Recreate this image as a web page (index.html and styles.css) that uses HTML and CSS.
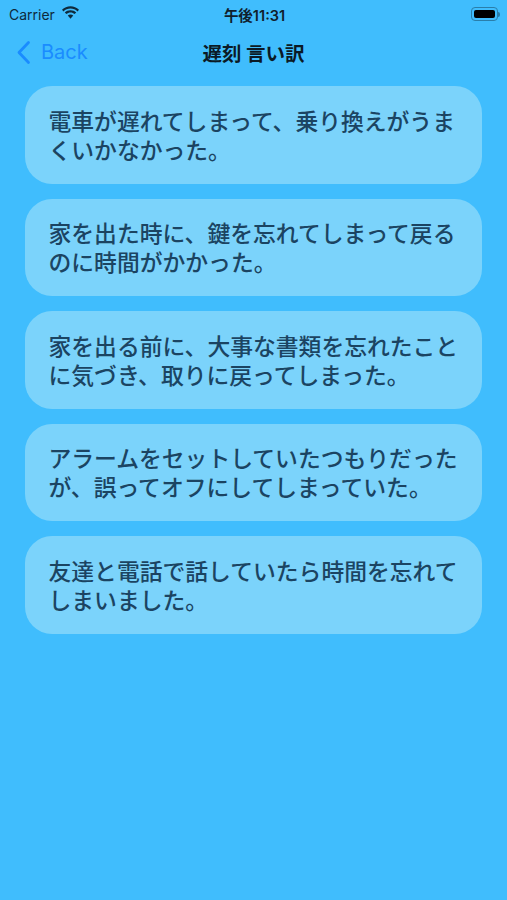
FILE: index.html
```html
<!DOCTYPE html>
<html lang="ja">
<head>
    <meta charset="UTF-8">
    <meta name="viewport" content="width=device-width, initial-scale=1.0">
    <title>遅刻 言い訳</title>
    <link rel="stylesheet" href="styles.css">
</head>
<body>
    <div class="status-bar">
        <div class="status-left">
            <span class="carrier">Carrier</span>
            <svg class="wifi" width="19" height="14" viewBox="0 0 19 14">
                <path d="M9.5 2.6c2.7 0 5.1 1 7 2.8l1.5-1.6C15.700 1.600 12.700.3 9.500.3S3.300 1.600 1 3.800l1.500 1.600c1.900-1.800 4.300-2.800 7-2.800z" fill="#0e2a3c"/>
                <path d="M9.500 6.500c1.600 0 3 .6 4.100 1.600l1.600-1.600C13.700 5 11.700 4.200 9.500 4.200S5.300 5 3.800 6.500l1.600 1.600c1.100-1 2.500-1.600 4.100-1.600z" fill="#0e2a3c"/>
                <path d="M9.500 8.400c-1.100 0-2 .4-2.700 1.100l2.700 3.300 2.700-3.300c-.7-.7-1.600-1.100-2.700-1.100z" fill="#0e2a3c"/>
            </svg>
        </div>
        <div class="clock">午後11:31</div>
        <div class="battery">
            <div class="battery-body"><div class="battery-fill"></div></div>
            <div class="battery-cap"></div>
        </div>
    </div>

    <div class="nav-bar">
        <div class="back">
            <svg class="chevron" width="15" height="25" viewBox="0 0 15 25">
                <path d="M12.500 2.500 L3 12.500 L12.500 22.500" fill="none" stroke="#1a8cff" stroke-width="2.800" stroke-linecap="round" stroke-linejoin="round"/>
            </svg>
            <span>Back</span>
        </div>
        <div class="nav-title">遅刻 言い訳</div>
    </div>

    <div class="list">
        <div class="card">電車が遅れてしまって、乗り換えがうまくいかなかった。</div>
        <div class="card">家を出た時に、鍵を忘れてしまって戻るのに時間がかかった。</div>
        <div class="card">家を出る前に、大事な書類を忘れたことに気づき、取りに戻ってしまった。</div>
        <div class="card">アラームをセットしていたつもりだったが、誤ってオフにしてしまっていた。</div>
        <div class="card">友達と電話で話していたら時間を忘れてしまいました。</div>
    </div>
</body>
</html>
```

FILE: styles.css
```css
html, body {
    height: 100%;
}
body {
    margin: 0;
    background: #40bdfd;
    font-family: "Liberation Sans", "Noto Sans CJK JP", sans-serif;
    overflow: hidden;
}
.status-bar {
    display: flex;
    justify-content: space-between;
    align-items: center;
    height: 28px;
    padding: 0 7px 0 9px;
    color: #0e2a3c;
}
.status-left {
    display: flex;
    align-items: center;
    gap: 6px;
    width: 120px;
}
.carrier {
    font-family: "Inter", "Liberation Sans", sans-serif;
    font-size: 14px;
}
.wifi {
    margin-bottom: 3px;
}
.clock {
    font-family: "Inter", "Noto Sans CJK JP", sans-serif;
    font-size: 14.500px;
    font-weight: 600;
    color: #10202c;
}
.battery {
    display: flex;
    align-items: center;
    justify-content: flex-end;
    width: 120px;
}
.battery-body {
    box-sizing: border-box;
    width: 27px;
    height: 14px;
    padding: 2px;
    border: 1px solid #2a7eaa;
    border-radius: 4px;
}
.battery-fill {
    height: 100%;
    background: #000;
    border-radius: 2px;
}
.battery-cap {
    width: 2px;
    height: 5px;
    background: #2a7eaa;
    border-radius: 0 2px 2px 0;
}
.nav-bar {
    position: relative;
    display: flex;
    justify-content: center;
    align-items: center;
    height: 48px;
}
.back {
    position: absolute;
    left: 16px;
    top: 0;
    bottom: 0;
    display: flex;
    align-items: center;
    gap: 10px;
    color: #1a8cff;
    font-family: "Inter", "Liberation Sans", sans-serif;
    font-size: 20px;
}
.nav-title {
    font-size: 19.500px;
    font-weight: 700;
    color: #0b1a26;
    font-family: "Noto Sans CJK JP", sans-serif;
}
.list {
    display: flex;
    flex-direction: column;
    gap: 15px;
    padding: 10px 25px 0 25px;
}
.card {
    box-sizing: border-box;
    height: 97.500px;
    padding: 19.500px 15px 0 23.500px;
    background: #7bd3fb;
    border-radius: 27px;
    color: #1b4462;
    font-family: "Noto Sans CJK JP", sans-serif;
    font-size: 22.800px;
    font-weight: 500;
    line-height: 29px;
}
```
